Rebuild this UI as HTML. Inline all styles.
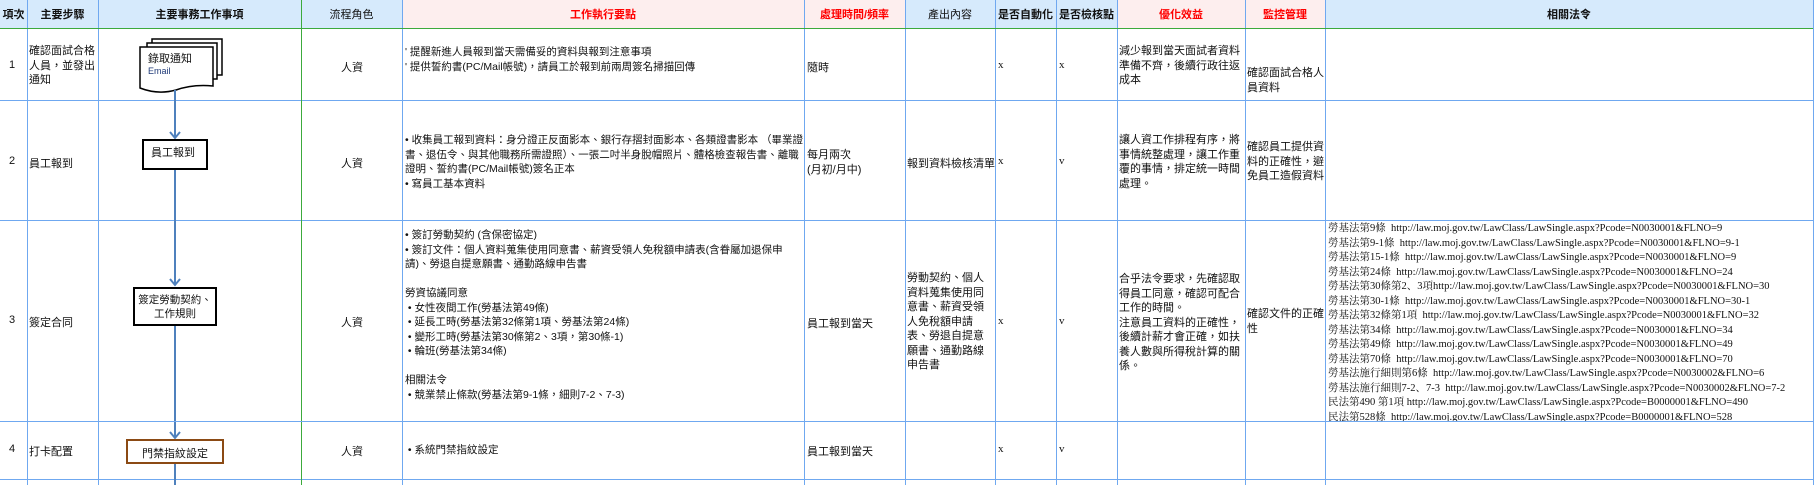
<!DOCTYPE html>
<html><head><meta charset="utf-8">
<style>
*{margin:0;padding:0;box-sizing:border-box}
body{width:1818px;height:485px;overflow:hidden;background:#fff;position:relative;font-family:"Liberation Sans","Noto Sans CJK TC",sans-serif;font-size:11px;color:#111}
.a{position:absolute}
.v{position:absolute;top:0;width:1px;height:485px;background:#6fa8f0}
.h{position:absolute;left:0;width:1813px;height:1px;background:#6fa8f0}
.hd{position:absolute;top:0;height:28px;display:flex;align-items:center;justify-content:center;font-size:11px;font-weight:bold}
.blue{background:#d6eafc}
.pink{background:#fdeeee;color:#f00}
.t{position:absolute;line-height:14.5px;font-size:10.5px}
.law{position:absolute;left:1328px;top:222px;font-family:"Liberation Serif","Noto Serif CJK SC",serif;font-size:10.5px;line-height:14.5px;white-space:nowrap;height:199px;overflow:hidden}
.box{position:absolute;border:2px solid #000;background:#fff;font-size:11px;text-align:center}
</style></head><body>
<div class="hd blue" style="left:0;width:27px">項次</div>
<div class="hd blue" style="left:27px;width:71px">主要步驟</div>
<div class="hd blue" style="left:98px;width:203px">主要事務工作事項</div>
<div class="hd blue" style="left:301px;width:101px;font-weight:normal">流程角色</div>
<div class="hd pink" style="left:402px;width:402px">工作執行要點</div>
<div class="hd pink" style="left:804px;width:101px">處理時間/頻率</div>
<div class="hd blue" style="left:905px;width:90px;font-weight:normal">產出內容</div>
<div class="hd blue" style="left:995px;width:61px">是否自動化</div>
<div class="hd blue" style="left:1056px;width:61px">是否檢核點</div>
<div class="hd pink" style="left:1117px;width:128px">優化效益</div>
<div class="hd pink" style="left:1245px;width:80px">監控管理</div>
<div class="hd blue" style="left:1325px;width:488px">相關法令</div>

<div class="h" style="top:100px"></div>
<div class="h" style="top:220px"></div>
<div class="h" style="top:479px"></div>
<div class="v" style="left:27px"></div>
<div class="v" style="left:98px"></div>
<div class="v" style="left:301px;background:#3caa3c"></div>
<div class="v" style="left:402px"></div>
<div class="v" style="left:804px"></div>
<div class="v" style="left:905px"></div>
<div class="v" style="left:995px"></div>
<div class="v" style="left:1056px"></div>
<div class="v" style="left:1117px"></div>
<div class="v" style="left:1245px"></div>
<div class="v" style="left:1325px"></div>
<div class="v" style="left:1813px"></div>
<div class="h" style="top:28px;background:#3caa3c"></div>

<div class="a" style="left:9px;top:59px">1</div>
<div class="a" style="left:9px;top:155px">2</div>
<div class="a" style="left:9px;top:314px">3</div>
<div class="a" style="left:9px;top:443px">4</div>
<div class="t" style="left:29px;top:44px;width:68px;font-size:11px">確認面試合格人員，並發出通知</div>
<div class="a" style="left:29px;top:155px">員工報到</div>
<div class="a" style="left:29px;top:314px">簽定合同</div>
<div class="a" style="left:29px;top:443px">打卡配置</div>
<div class="a" style="left:341px;top:59px">人資</div>
<div class="a" style="left:341px;top:155px">人資</div>
<div class="a" style="left:341px;top:314px">人資</div>
<div class="a" style="left:341px;top:443px">人資</div>

<svg class="a" style="left:98px;top:28px" width="203" height="457">
<g fill="#fff" stroke="#000" stroke-width="1.5">
<rect x="54" y="11" width="70" height="36"/>
<rect x="49" y="15" width="70" height="36"/>
<path d="M42 19 H115 V58 Q95 56 78 62 Q60 67 42 60 Z"/>
</g>
<g stroke="#4f81bd" stroke-width="2" fill="none">
<line x1="77" y1="62" x2="77" y2="110"/>
<path d="M72 104 L77 110 L82 104"/>
<line x1="77" y1="140" x2="77" y2="257"/>
<path d="M72 251 L77 257 L82 251"/>
<line x1="77" y1="297" x2="77" y2="410"/>
<path d="M72 404 L77 410 L82 404"/>
<line x1="77" y1="435" x2="77" y2="457"/>
</g>
</svg>
<div class="a" style="left:148px;top:50px;font-size:11px">錄取通知</div>
<div class="a" style="left:148px;top:66px;font-size:9px;color:#1f3a78">Email</div>
<div class="box" style="left:142px;top:139px;width:66px;height:31px;text-align:left;padding:3px 0 0 7px">員工報到</div>
<div class="box" style="left:133px;top:287px;width:84px;height:39px;padding-top:4px;line-height:14px;font-size:10.5px">簽定勞動契約、<br>工作規則</div>
<div class="box" style="left:126px;top:439px;width:98px;height:25px;border-color:#8b4a14;padding-top:4px">門禁指紋設定</div>

<div class="t" style="left:405px;top:45px">' 提醒新進人員報到當天需備妥的資料與報到注意事項<br>' 提供誓約書(PC/Mail帳號)，請員工於報到前兩周簽名掃描回傳</div>
<div class="t" style="left:405px;top:133px;width:398px">• 收集員工報到資料：身分證正反面影本、銀行存摺封面影本、各類證書影本 （畢業證書、退伍令、與其他職務所需證照）、一張二吋半身脫帽照片、體格檢查報告書、離職證明、誓約書(PC/Mail帳號)簽名正本<br>• 寫員工基本資料</div>
<div class="t" style="left:405px;top:228px;width:398px">• 簽訂勞動契約 (含保密協定)<br>• 簽訂文件：個人資料蒐集使用同意書、薪資受領人免稅額申請表(含眷屬加退保申請)、勞退自提意願書、通勤路線申告書<br><br>勞資協議同意<br>&nbsp;• 女性夜間工作(勞基法第49條)<br>&nbsp;• 延長工時(勞基法第32條第1項、勞基法第24條)<br>&nbsp;• 變形工時(勞基法第30條第2、3項，第30條-1)<br>&nbsp;• 輪班(勞基法第34條)<br><br>相關法令<br>&nbsp;• 競業禁止條款(勞基法第9-1條，細則7-2、7-3)</div>
<div class="t" style="left:405px;top:443px">&nbsp;• 系統門禁指紋設定</div>

<div class="a" style="left:807px;top:59px">隨時</div>
<div class="t" style="left:807px;top:148px;font-size:11px">每月兩次<br>(月初/月中)</div>
<div class="a" style="left:807px;top:315px">員工報到當天</div>
<div class="a" style="left:807px;top:443px">員工報到當天</div>
<div class="a" style="left:907px;top:155px;font-size:11px">報到資料檢核清單</div>
<div class="t" style="left:907px;top:271px;width:80px;font-size:11px">勞動契約、個人資料蒐集使用同意書、薪資受領人免稅額申請表、勞退自提意願書、通勤路線申告書</div>
<div class="a" style="left:998px;top:59px;font-family:'Liberation Serif',serif">x</div>
<div class="a" style="left:1059px;top:59px;font-family:'Liberation Serif',serif">x</div>
<div class="a" style="left:998px;top:155px;font-family:'Liberation Serif',serif">x</div>
<div class="a" style="left:1059px;top:155px;font-family:'Liberation Serif',serif">v</div>
<div class="a" style="left:998px;top:315px;font-family:'Liberation Serif',serif">x</div>
<div class="a" style="left:1059px;top:315px;font-family:'Liberation Serif',serif">v</div>
<div class="a" style="left:998px;top:443px;font-family:'Liberation Serif',serif">x</div>
<div class="a" style="left:1059px;top:443px;font-family:'Liberation Serif',serif">v</div>
<div class="t" style="left:1119px;top:44px;width:124px;font-size:11px">減少報到當天面試者資料準備不齊，後續行政往返成本</div>
<div class="t" style="left:1119px;top:133px;width:124px;font-size:11px">讓人資工作排程有序，將事情統整處理，讓工作重覆的事情，排定統一時間處理。</div>
<div class="t" style="left:1119px;top:272px;width:124px;font-size:11px">合乎法令要求，先確認取得員工同意，確認可配合工作的時間。<br>注意員工資料的正確性，後續計薪才會正確，如扶養人數與所得稅計算的關係。</div>
<div class="t" style="left:1247px;top:66px;width:78px;font-size:11px">確認面試合格人員資料</div>
<div class="t" style="left:1247px;top:140px;width:78px;font-size:11px">確認員工提供資料的正確性，避免員工造假資料</div>
<div class="t" style="left:1247px;top:307px;width:78px;font-size:11px">確認文件的正確性</div>
<div class="law">勞基法第9條&nbsp; http://law.moj.gov.tw/LawClass/LawSingle.aspx?Pcode=N0030001&amp;FLNO=9<br>勞基法第9-1條&nbsp; http://law.moj.gov.tw/LawClass/LawSingle.aspx?Pcode=N0030001&amp;FLNO=9-1<br>勞基法第15-1條&nbsp; http://law.moj.gov.tw/LawClass/LawSingle.aspx?Pcode=N0030001&amp;FLNO=9<br>勞基法第24條&nbsp; http://law.moj.gov.tw/LawClass/LawSingle.aspx?Pcode=N0030001&amp;FLNO=24<br>勞基法第30條第2、3項http://law.moj.gov.tw/LawClass/LawSingle.aspx?Pcode=N0030001&amp;FLNO=30<br>勞基法第30-1條&nbsp; http://law.moj.gov.tw/LawClass/LawSingle.aspx?Pcode=N0030001&amp;FLNO=30-1<br>勞基法第32條第1項&nbsp; http://law.moj.gov.tw/LawClass/LawSingle.aspx?Pcode=N0030001&amp;FLNO=32<br>勞基法第34條&nbsp; http://law.moj.gov.tw/LawClass/LawSingle.aspx?Pcode=N0030001&amp;FLNO=34<br>勞基法第49條&nbsp; http://law.moj.gov.tw/LawClass/LawSingle.aspx?Pcode=N0030001&amp;FLNO=49<br>勞基法第70條&nbsp; http://law.moj.gov.tw/LawClass/LawSingle.aspx?Pcode=N0030001&amp;FLNO=70<br>勞基法施行細則第6條&nbsp; http://law.moj.gov.tw/LawClass/LawSingle.aspx?Pcode=N0030002&amp;FLNO=6<br>勞基法施行細則7-2、7-3&nbsp; http://law.moj.gov.tw/LawClass/LawSingle.aspx?Pcode=N0030002&amp;FLNO=7-2<br>民法第490 第1項 http://law.moj.gov.tw/LawClass/LawSingle.aspx?Pcode=B0000001&amp;FLNO=490<br>民法第528條&nbsp; http://law.moj.gov.tw/LawClass/LawSingle.aspx?Pcode=B0000001&amp;FLNO=528</div>
<div class="h" style="top:421px"></div>
</body></html>
